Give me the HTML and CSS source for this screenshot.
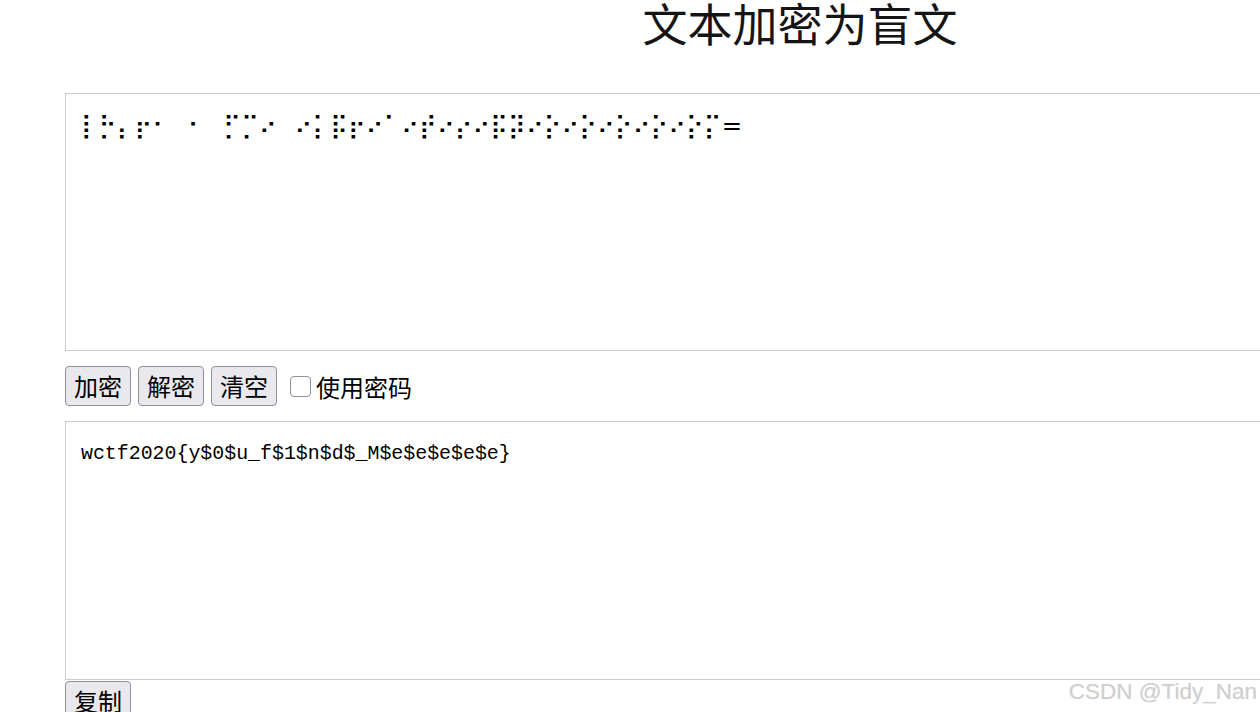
FILE: index.html
```html
<!DOCTYPE html>
<html lang="zh">
<head>
<meta charset="utf-8">
<title>文本加密为盲文</title>
<link rel="stylesheet" href="styles.css">
</head>
<body>
<div class="page">
  <h1 class="title">文本加密为盲文</h1>
  <div class="content">
    <textarea class="box box-braille" spellcheck="false">⡇⡓⡄⡖⠂⠀⠂⠀⡋⡉⠔⠀⠔⡅⡯⡖⠔⠁⠔⡞⠔⡔⠔⡯⡽⠔⡕⠔⡕⠔⡕⠔⡕⠔⡕⡍=</textarea>
    <div class="controls">
      <button class="btn" type="button">加密</button>
      <button class="btn" type="button">解密</button>
      <button class="btn" type="button">清空</button>
      <label class="check"><input class="check-input" type="checkbox"><span>使用密码</span></label>
    </div>
    <textarea class="box box-plain" spellcheck="false">wctf2020{y$0$u_f$1$n$d$_M$e$e$e$e$e}</textarea>
    <div class="copy-row">
      <button class="btn" type="button">复制</button>
    </div>
  </div>
</div>
<div class="watermark">CSDN @Tidy_Nan</div>
</body>
</html>
```

FILE: styles.css
```css
html, body {
  margin: 0;
  padding: 0;
  overflow: hidden;
  background: #ffffff;
  width: 1260px;
  height: 712px;
}

.page {
  width: 1260px;
  height: 712px;
  overflow: hidden;
  font-family: "Noto Sans CJK SC", "Noto Sans", sans-serif;
  color: #111;
}

.title {
  margin: 0;
  box-sizing: border-box;
  padding-left: 340px;
  height: 49px;
  line-height: 46px;
  font-size: 45px;
  font-weight: 400;
  text-align: center;
  color: #151515;
}

.content {
  padding-left: 65px;
  padding-top: 44px;
  display: flex;
  flex-direction: column;
  align-items: flex-start;
}

.box {
  display: block;
  box-sizing: border-box;
  width: 1195px;
  margin: 0;
  padding: 18px 15px;
  border: 1px solid #cccccc;
  border-right: none;
  border-radius: 0;
  resize: none;
  outline: none;
  background: #fff;
  color: #000;
  overflow: hidden;
}

.box-braille {
  height: 258px;
  font-family: "DejaVu Sans", sans-serif;
  font-size: 24.3px;
  line-height: 30px;
  padding-top: 17px;
}

.box-plain {
  height: 259px;
  font-family: "Liberation Mono", monospace;
  font-size: 19.9px;
  line-height: 30px;
  padding-top: 17px;
}

.controls {
  display: flex;
  align-items: center;
  gap: 7px;
  margin: 15px 0;
  height: 40px;
}

.btn {
  box-sizing: border-box;
  height: 40px;
  padding: 0 8px;
  border: 1px solid #8f8f9d;
  border-radius: 4px;
  background: #e9e9ed;
  color: #000;
  font-family: "Noto Sans CJK SC", "Noto Sans", sans-serif;
  font-size: 24px;
  line-height: 38px;
  cursor: pointer;
}

.check {
  display: flex;
  align-items: center;
  margin-left: 6px;
  font-size: 24px;
  color: #000;
}

.check-input {
  appearance: none;
  -webkit-appearance: none;
  box-sizing: border-box;
  width: 21px;
  height: 21px;
  margin: 0 5px 0 0;
  border: 1px solid #8f8f9d;
  border-radius: 4px;
  background: #fff;
}

.copy-row {
  margin-top: 1px;
}

.watermark {
  position: absolute;
  right: 3px;
  bottom: 7px;
  font-family: "Liberation Sans", Arial, sans-serif;
  font-size: 22.5px;
  color: #cfcfcf;
  text-shadow: 0 0 1px #e6e6e6;
}
```
